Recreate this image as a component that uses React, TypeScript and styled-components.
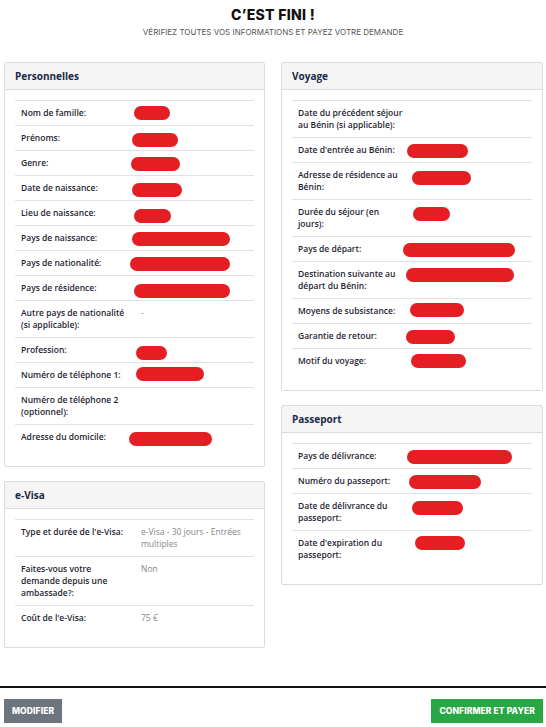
import React from 'react';
import styled, { createGlobalStyle } from 'styled-components';

const GlobalStyle = createGlobalStyle`
  html, body {
    margin: 0;
    padding: 0;
    background: #fff;
  }
  body {
    font-family: "Open Sans", "Liberation Sans", sans-serif;
    color: #1f2533;
  }
  * {
    box-sizing: border-box;
  }
`;

type Pill = { x: number; w: number; y: number };
type Item = { label: string; value?: string; pill?: Pill };

const personal: Item[] = [
  { label: 'Nom de famille:', pill: { x: -7, w: 36, y: 5 } },
  { label: 'Prénoms:', pill: { x: -9, w: 46, y: 7 } },
  { label: 'Genre:', pill: { x: -10, w: 49, y: 6 } },
  { label: 'Date de naissance:', pill: { x: -9, w: 50, y: 7 } },
  { label: 'Lieu de naissance:', pill: { x: -7, w: 37, y: 8 } },
  { label: 'Pays de naissance:', pill: { x: -9, w: 98, y: 6 } },
  { label: 'Pays de nationalité:', pill: { x: -11, w: 100, y: 6 } },
  { label: 'Pays de résidence:', pill: { x: -7, w: 96, y: 8 } },
  { label: 'Autre pays de nationalité (si applicable):', value: '-' },
  { label: 'Profession:', pill: { x: -5, w: 31, y: 8 } },
  { label: 'Numéro de téléphone 1:', pill: { x: -5, w: 68, y: 4 } },
  { label: 'Numéro de téléphone 2 (optionnel):', value: '' },
  { label: 'Adresse du domicile:', pill: { x: -12, w: 83, y: 7 } },
];

const evisa: Item[] = [
  { label: "Type et durée de l'e-Visa:", value: 'e-Visa - 30 jours - Entrées multiples' },
  { label: 'Faites-vous votre demande depuis une ambassade?:', value: 'Non' },
  { label: "Coût de l'e-Visa:", value: '75 €' },
];

const voyage: Item[] = [
  { label: 'Date du précédent séjour au Bénin (si applicable):', value: '' },
  { label: "Date d'entrée au Bénin:", pill: { x: -11, w: 61, y: 6 } },
  { label: 'Adresse de résidence au Bénin:', pill: { x: -6, w: 59, y: 8 } },
  { label: 'Durée du séjour (en jours):', pill: { x: -5, w: 37, y: 7 } },
  { label: 'Pays de départ:', pill: { x: -15, w: 112, y: 6 } },
  { label: 'Destination suivante au départ du Bénin:', pill: { x: -12, w: 108, y: 6 } },
  { label: 'Moyens de subsistance:', pill: { x: -8, w: 54, y: 4 } },
  { label: 'Garantie de retour:', pill: { x: -12, w: 49, y: 6 } },
  { label: 'Motif du voyage:', pill: { x: -7, w: 55, y: 5 } },
];

const passport: Item[] = [
  { label: 'Pays de délivrance:', pill: { x: -11, w: 105, y: 6 } },
  { label: 'Numéro du passeport:', pill: { x: -9, w: 72, y: 6 } },
  { label: 'Date de délivrance du passeport:', pill: { x: -6, w: 51, y: 7 } },
  { label: "Date d'expiration du passeport:", pill: { x: -3, w: 50, y: 5 } },
];

const Section: React.FC<{ title: string; items: Item[] }> = ({ title, items }) => (
  <Card>
    <CardHeader>{title}</CardHeader>
    <CardBody>
      {items.map((item) => (
        <Row key={item.label}>
          <Label>{item.label}</Label>
          <Value>
            {item.pill ? (
              <Redacted $x={item.pill.x} $w={item.pill.w} $y={item.pill.y} />
            ) : (
              item.value
            )}
          </Value>
        </Row>
      ))}
    </CardBody>
  </Card>
);

const App: React.FC = () => {
  return (
    <Page>
      <GlobalStyle />
      <Heading>
        <Title>C’EST FINI !</Title>
        <Subtitle>Vérifiez toutes vos informations et payez votre demande</Subtitle>
      </Heading>
      <Columns>
        <Column>
          <Section title="Personnelles" items={personal} />
          <Section title="e-Visa" items={evisa} />
        </Column>
        <Column>
          <Section title="Voyage" items={voyage} />
          <Section title="Passeport" items={passport} />
        </Column>
      </Columns>
      <Footer>
        <ActionButton $color="#6c757d">Modifier</ActionButton>
        <ActionButton $color="#28a745">Confirmer et payer</ActionButton>
      </Footer>
    </Page>
  );
};

const Page = styled.div`
  width: 546px;
  height: 727px;
  display: flex;
  flex-direction: column;
`;
const Heading = styled.div`
  display: flex;
  flex-direction: column;
  align-items: center;
  padding-top: 6px;
  height: 62px;
`;
const Title = styled.h1`
  margin: 0;
  font-family: Inter, "Liberation Sans", sans-serif;
  font-weight: 800;
  font-size: 14px;
  line-height: 17px;
  color: #111;
  letter-spacing: 0.3px;
`;
const Subtitle = styled.div`
  margin-top: 4px;
  font-family: Inter, "Liberation Sans", sans-serif;
  font-size: 8px;
  line-height: 10px;
  text-transform: uppercase;
  color: #555;
`;
const Columns = styled.div`
  flex: 1;
  display: grid;
  grid-template-columns: 261px 262px;
  column-gap: 16px;
  padding: 0 3px 0 4px;
  align-items: start;
`;
const Column = styled.div`
  display: flex;
  flex-direction: column;
  gap: 14px;
`;
const Card = styled.div`
  border: 1px solid #dcdcdc;
  border-radius: 2px;
  background: #fff;
`;
const CardHeader = styled.div`
  height: 27px;
  padding: 0 10px;
  display: flex;
  align-items: center;
  background: #f5f5f5;
  border-bottom: 1px solid #dcdcdc;
  font-size: 10px;
  font-weight: 700;
  color: #1b2a47;
`;
const CardBody = styled.div`
  padding: 10px 10px 17px;
`;
const Row = styled.div`
  display: grid;
  grid-template-columns: 120px 1fr;
  border-top: 1px solid #dee2e6;
  padding: 6px 0 6px;
  font-size: 8.5px;
  line-height: 12px;
`;
const Label = styled.div`
  padding: 0 6px;
  font-weight: 600;
  color: #1f2533;
`;
const Value = styled.div`
  padding: 0 6px;
  color: #888;
`;
const Redacted = styled.span<{ $x: number; $w: number; $y: number }>`
  display: block;
  width: ${(p) => p.$w}px;
  height: 14px;
  margin: ${(p) => p.$y - 6}px 0 ${(p) => 4 - p.$y}px ${(p) => p.$x}px;
  border-radius: 7px;
  background: #e41e22;
`;
const Footer = styled.div`
  display: flex;
  justify-content: space-between;
  align-items: flex-start;
  border-top: 2px solid #111;
  padding: 11px 3px 0 4px;
  height: 41px;
`;
const ActionButton = styled.button<{ $color: string }>`
  height: 24px;
  padding: 0 8px;
  border: none;
  border-radius: 0;
  background: ${(p) => p.$color};
  color: #fff;
  font-family: Inter, "Liberation Sans", sans-serif;
  font-weight: 800;
  font-size: 8.5px;
  letter-spacing: 0.1px;
  text-transform: uppercase;
`;

export default App;
